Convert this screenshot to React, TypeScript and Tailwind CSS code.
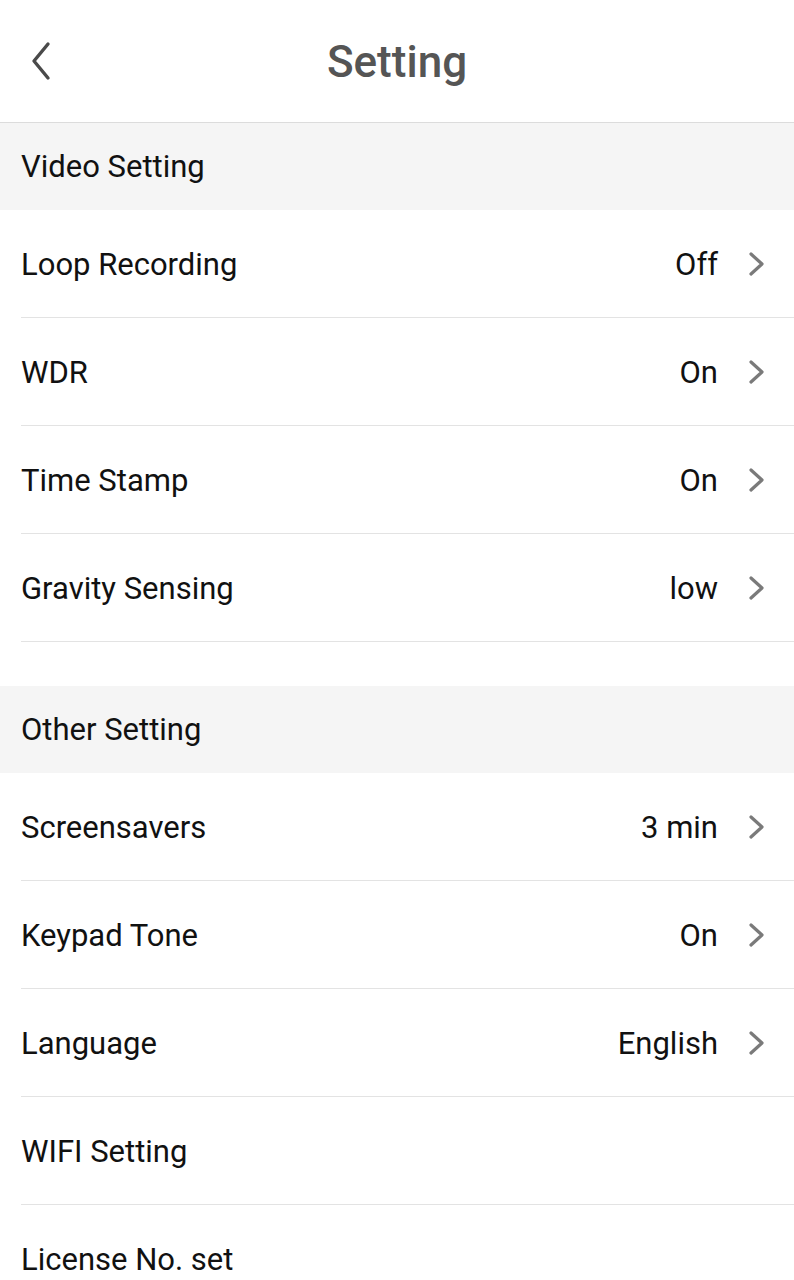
import React from "react";

const Chevron = () => (
  <svg width="18" height="26" viewBox="0 0 18 26" className="ml-[30px] mr-[28px]">
    <path d="M3 3 L14 13 L3 23" fill="none" stroke="#7a7a7a" strokeWidth="3.2" strokeLinecap="round" strokeLinejoin="round" />
  </svg>
);

const Row = ({ label, value, arrow = true }: { label: string; value?: string; arrow?: boolean }) => (
  <div className="pl-[21px]">
    <div className="h-[108px] flex items-center border-b border-[#e3e3e3]">
      <span className="flex-1 text-[31px] text-[#111] pt-[3px]">{label}</span>
      {value && <span className="text-[31px] text-[#111] pt-[3px]">{value}</span>}
      {arrow && <Chevron />}
    </div>
  </div>
);

const Section = ({ title }: { title: string }) => (
  <div className="h-[87px] bg-[#f5f5f5] flex items-center pl-[21px] text-[31px] text-[#111] pt-[2px]">{title}</div>
);

export default function App() {
  return (
    <div className="w-[794px] h-[1280px] overflow-hidden bg-white" style={{ fontFamily: "Roboto, 'Noto Sans', sans-serif" }}>
      <div className="h-[123px] relative flex items-center justify-center border-b border-[#dcdcdc]">
        <svg width="30" height="40" viewBox="0 0 30 40" className="absolute left-[26px] top-[41px]">
          <path d="M22 3 L8 20 L22 37" fill="none" stroke="#4a4a4a" strokeWidth="3.4" strokeLinecap="round" strokeLinejoin="round" />
        </svg>
        <span className="text-[44px] font-medium text-[#555] pt-[2px]">Setting</span>
      </div>
      <Section title="Video Setting" />
      <Row label="Loop Recording" value="Off" />
      <Row label="WDR" value="On" />
      <Row label="Time Stamp" value="On" />
      <Row label="Gravity Sensing" value="low" />
      <div className="h-[44px]" />
      <Section title="Other Setting" />
      <Row label="Screensavers" value="3 min" />
      <Row label="Keypad Tone" value="On" />
      <Row label="Language" value="English" />
      <Row label="WIFI Setting" arrow={false} />
      <Row label="License No. set" arrow={false} />
    </div>
  );
}
